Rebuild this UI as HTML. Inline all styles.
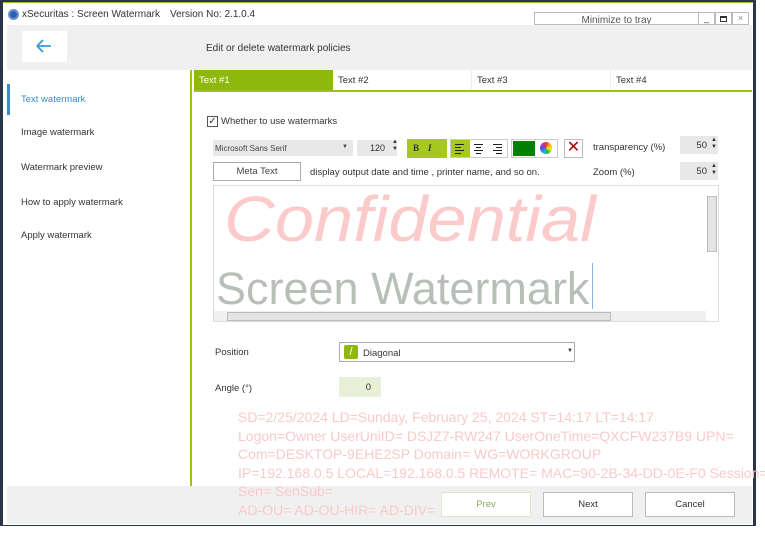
<!DOCTYPE html>
<html><head><style>
*{margin:0;padding:0;box-sizing:border-box}
body{width:765px;height:533px;background:#fff;font-family:"Liberation Sans",sans-serif;font-size:9.5px;color:#333;position:relative;overflow:hidden}
.a{position:absolute}
</style></head><body>
<div class="a" style="left:0;top:0;width:756px;height:526px;background:#2b3548"></div>
<div class="a" style="left:3px;top:2px;width:750px;height:1px;background:#9dc21a"></div>
<div class="a" style="left:3px;top:3px;width:750px;height:522px;background:#fff"></div>
<!-- title -->
<div class="a" style="left:8px;top:9px;width:11px;height:11px;border-radius:50%;background:#2f5fb0;border:2px solid #6d8fd0"></div>
<div class="a" style="left:22px;top:9px;font-size:10px;color:#333">xSecuritas : Screen Watermark</div>
<div class="a" style="left:170px;top:9px;font-size:10px;color:#333">Version No: 2.1.0.4</div>
<div class="a" style="left:534px;top:12px;width:165px;height:13px;border:1px solid #bbb;font-size:10px;color:#555;text-align:center;line-height:15px;overflow:hidden">Minimize to tray</div>
<div class="a" style="left:698px;top:12px;width:17px;height:13px;border:1px solid #bbb;text-align:center;line-height:10px;font-size:9px">_</div>
<div class="a" style="left:715px;top:12px;width:17px;height:13px;border:1px solid #bbb"><div style="margin:3px 4px;width:7px;height:6px;border:1px solid #333;border-top-width:2px"></div></div>
<div class="a" style="left:732px;top:12px;width:17px;height:13px;border:1px solid #bbb;text-align:center;line-height:11px;font-size:9px;color:#888">×</div>
<!-- header -->
<div class="a" style="left:7px;top:25px;width:745px;height:45px;background:#f0f0f0"></div>
<div class="a" style="left:22px;top:31px;width:45px;height:31px;background:#fff"></div>
<svg class="a" style="left:35px;top:38px" width="18" height="16"><path d="M2 8H16M2 8L8 2M2 8L8 14" stroke="#3a9ad9" stroke-width="1.8" fill="none"/></svg>
<div class="a" style="left:206px;top:43px;font-size:10px;color:#333">Edit or delete watermark policies</div>
<!-- sidebar -->
<div class="a" style="left:7px;top:84px;width:3px;height:31px;background:#3a8cc6"></div>
<div class="a" style="left:21px;top:94px;color:#3a8cc6">Text watermark</div>
<div class="a" style="left:21px;top:127px">Image watermark</div>
<div class="a" style="left:21px;top:162px">Watermark preview</div>
<div class="a" style="left:21px;top:197px">How to apply watermark</div>
<div class="a" style="left:21px;top:230px">Apply watermark</div>
<div class="a" style="left:190px;top:70px;width:2px;height:416px;background:#9dc21a"></div>
<!-- tabs -->
<div class="a" style="left:194px;top:70px;width:139px;height:20px;background:#8fb80f;color:#fff;padding:5px 5px">Text #1</div>
<div class="a" style="left:333px;top:70px;width:139px;height:20px;border-right:1px solid #eee;padding:5px 5px">Text #2</div>
<div class="a" style="left:472px;top:70px;width:139px;height:20px;border-right:1px solid #eee;padding:5px 5px">Text #3</div>
<div class="a" style="left:611px;top:70px;width:139px;height:20px;padding:5px 5px">Text #4</div>
<div class="a" style="left:194px;top:90px;width:558px;height:2px;background:#9dc21a"></div>
<div class="a" style="left:207px;top:116px;width:11px;height:11px;border:1px solid #555;font-size:10px;line-height:9px;text-align:center">✓</div>
<div class="a" style="left:221px;top:116px">Whether to use watermarks</div>
<!-- toolbar -->
<div class="a" style="left:213px;top:140px;width:140px;height:16px;background:#e8e8e8;font-size:8px;padding:4px 2px;color:#444">Microsoft Sans Serif<span style="position:absolute;right:5px;font-size:6px">▼</span></div>
<div class="a" style="left:357px;top:140px;width:40px;height:16px;background:#e8e8e8;font-size:9px;padding:3px 12px 0 0;text-align:right">120</div>
<div class="a" style="left:392px;top:139px;font-size:6px;line-height:7px">▲<br>▼</div>
<div class="a" style="left:407px;top:139px;width:40px;height:19px;background:#a7c81e;font-size:9px;font-weight:bold;padding:4px 6px;font-family:'Liberation Serif',serif">B &nbsp;&nbsp; <i>I</i></div>
<div class="a" style="left:450px;top:139px;width:58px;height:19px;border:1px solid #ccc"><div style="width:19px;height:17px;background:#a7c81e"></div></div>
<svg class="a" style="left:450px;top:139px" width="58" height="19"><g stroke="#222" stroke-width="1"><path d="M5 5.5h9M5 8.5h6M5 11.5h9M5 14.5h6"/><path d="M24 5.5h9M26 8.5h5M24 11.5h9M26 14.5h5"/><path d="M43 5.5h9M46 8.5h6M43 11.5h9M46 14.5h6"/></g></svg>
<div class="a" style="left:511px;top:139px;width:47px;height:19px;border:1px solid #ccc"><div style="margin:1px;width:22px;height:15px;background:#008000"></div></div>
<div class="a" style="left:540px;top:142px;width:12px;height:12px;border-radius:50%;background:conic-gradient(#e33,#fa0,#ee2,#3b3,#3ad,#36e,#a3c,#e33)"></div>
<div class="a" style="left:564px;top:139px;width:19px;height:19px;border:1px solid #bbb;color:#a00;font-size:16px;line-height:16px;text-align:center">✕</div>
<div class="a" style="left:593px;top:142px">transparency (%)</div>
<div class="a" style="left:680px;top:136px;width:38px;height:18px;background:#e8e8e8;text-align:right;padding:4px 11px 0 0">50</div>
<div class="a" style="left:711px;top:137px;font-size:6px;line-height:7px">▲<br>▼</div>
<div class="a" style="left:213px;top:162px;width:88px;height:19px;border:1px solid #aaa;text-align:center;line-height:17px;color:#444">Meta Text</div>
<div class="a" style="left:310px;top:167px">display output date and time , printer name, and so on.</div>
<div class="a" style="left:593px;top:167px">Zoom (%)</div>
<div class="a" style="left:680px;top:162px;width:38px;height:18px;background:#e8e8e8;text-align:right;padding:4px 11px 0 0">50</div>
<div class="a" style="left:711px;top:163px;font-size:6px;line-height:7px">▲<br>▼</div>
<!-- preview -->
<div class="a" style="left:213px;top:185px;width:506px;height:137px;border:1px solid #ddd;overflow:hidden">
<div class="a" style="left:10px;top:-4px;font-size:64px;font-style:italic;color:#fbcaca;white-space:nowrap;transform:scaleX(1.1);transform-origin:left">Confidential</div>
<div class="a" style="left:2px;top:77px;font-size:45px;color:#b8bfb8;white-space:nowrap">Screen Watermark</div>
<div class="a" style="left:378px;top:77px;width:1px;height:46px;background:#8ab4e0"></div>
<div class="a" style="left:493px;top:10px;width:10px;height:56px;background:#e4e4e4;border:1px solid #bbb"></div>
<div class="a" style="left:0;top:125px;width:492px;height:11px;background:#f0f0f0"></div>
<div class="a" style="left:13px;top:126px;width:384px;height:9px;background:#e4e4e4;border:1px solid #bbb"></div>
</div>
<!-- position -->
<div class="a" style="left:215px;top:347px">Position</div>
<div class="a" style="left:339px;top:342px;width:236px;height:20px;border:1px solid #aaa"></div>
<div class="a" style="left:344px;top:345px;width:14px;height:14px;background:#8fb80f;border-radius:2px;color:#fff;font-size:11px;line-height:14px;text-align:center">/</div>
<div class="a" style="left:363px;top:348px">Diagonal</div>
<div class="a" style="left:567px;top:348px;font-size:6px">▼</div>
<div class="a" style="left:215px;top:383px">Angle (°)</div>
<div class="a" style="left:339px;top:377px;width:42px;height:20px;background:#e8f0d8;text-align:right;padding:5px 10px 0 0">0</div>
<!-- footer -->
<div class="a" style="left:7px;top:486px;width:745px;height:38px;background:#f0f0f1"></div>
<div class="a" style="left:238px;top:408px;font-size:14px;line-height:18.6px;color:#f8caca;white-space:nowrap">SD=2/25/2024 LD=Sunday, February 25, 2024 ST=14:17 LT=14:17<br>Logon=Owner UserUniID= DSJZ7-RW247 UserOneTime=QXCFW237B9 UPN=<br>Com=DESKTOP-9EHE2SP Domain= WG=WORKGROUP<br>IP=192.168.0.5 LOCAL=192.168.0.5 REMOTE= MAC=90-2B-34-DD-0E-F0 Session=1<br>Sen= SenSub=<br>AD-OU= AD-OU-HIR= AD-DIV=</div>
<div class="a" style="left:441px;top:492px;width:90px;height:25px;background:#fff;border:1px solid #dde8c8;text-align:center;line-height:23px;color:#8fa860">Prev</div>
<div class="a" style="left:543px;top:492px;width:90px;height:25px;background:#fff;border:1px solid #bbb;text-align:center;line-height:23px">Next</div>
<div class="a" style="left:645px;top:492px;width:90px;height:25px;background:#fff;border:1px solid #bbb;text-align:center;line-height:23px">Cancel</div>
</body></html>
